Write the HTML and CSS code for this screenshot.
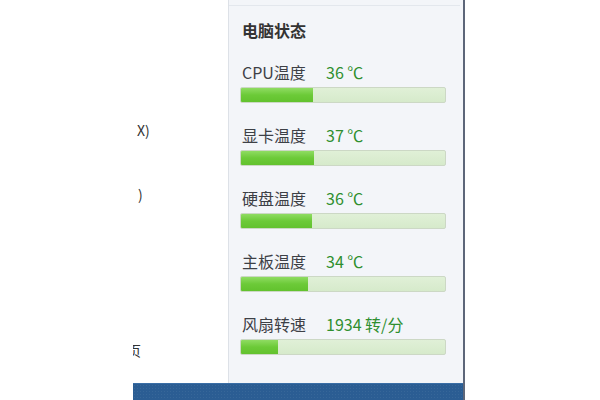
FILE: index.html
```html
<!DOCTYPE html>
<html lang="zh-CN">
<head>
<meta charset="utf-8">
<title>电脑状态</title>
<link rel="stylesheet" href="styles.css">
</head>
<body>
<div class="screen">
  <div class="outside"></div>
  <div class="window">
    <div class="main">
      <div class="left">
        <div class="left-line l1">X)</div>
        <div class="left-line l2">)</div>
        <div class="left-line l3">页</div>
      </div>
      <div class="panel">
        <div class="sep"></div>
        <div class="title">电脑状态</div>
        <div class="row">
          <div class="info"><span class="label">CPU温度</span><span class="value">36 ℃</span></div>
          <div class="bar"><div class="fill" style="width:72px"></div></div>
        </div>
        <div class="row">
          <div class="info"><span class="label">显卡温度</span><span class="value">37 ℃</span></div>
          <div class="bar"><div class="fill" style="width:73px"></div></div>
        </div>
        <div class="row">
          <div class="info"><span class="label">硬盘温度</span><span class="value">36 ℃</span></div>
          <div class="bar"><div class="fill" style="width:71px"></div></div>
        </div>
        <div class="row">
          <div class="info"><span class="label">主板温度</span><span class="value">34 ℃</span></div>
          <div class="bar"><div class="fill" style="width:67px"></div></div>
        </div>
        <div class="row">
          <div class="info"><span class="label">风扇转速</span><span class="value">1934 转/分</span></div>
          <div class="bar"><div class="fill" style="width:37px"></div></div>
        </div>
      </div>
    </div>
    <div class="taskbar"></div>
  </div>
</div>
</body>
</html>
```

FILE: styles.css
```css
html, body {
  margin: 0;
  padding: 0;
  background: #ffffff;
}
.screen {
  width: 600px;
  height: 400px;
  display: flex;
  overflow: hidden;
  background: #ffffff;
  font-family: "Noto Sans CJK SC", "Noto Sans", sans-serif;
}
.outside {
  width: 133px;
  flex: none;
}
.window {
  width: 330px;
  flex: none;
  display: flex;
  flex-direction: column;
  border-right: 2px solid #5d6679;
}
.main {
  height: 383px;
  display: flex;
}
.left {
  width: 95px;
  flex: none;
  overflow: hidden;
  background: #ffffff;
  color: #333333;
  font-size: 14px;
}
.left-line {
  white-space: nowrap;
  line-height: 20px;
}
.l1 { margin-top: 120px; padding-left: 4px; }
.l2 { margin-top: 44px; padding-left: 5px; }
.l3 { margin-top: 136px; margin-left: -6px; }
.panel {
  flex: 1;
  background: #f3f5f9;
  border-left: 1px solid #dde1e7;
  padding: 0 15px 0 13px;
  display: flex;
  flex-direction: column;
}
.sep {
  height: 1px;
  margin: 5px -12px 0 -13px;
  background: #e3e7ed;
}
.title {
  margin-top: 12px;
  height: 24px;
  line-height: 24px;
  font-size: 16px;
  font-weight: bold;
  color: #333333;
}
.row {
  margin-top: 18px;
  display: flex;
  flex-direction: column;
}
.row + .row {
  margin-top: 20px;
}
.info {
  height: 24px;
  line-height: 24px;
  display: flex;
  font-size: 16px;
}
.label {
  width: 84px;
  flex: none;
  color: #3d4046;
}
.value {
  color: #2f8f2f;
}
.bar {
  margin-top: 3px;
  margin-left: -2px;
  width: 204px;
  height: 14px;
  border: 1px solid #ccd8c5;
  border-radius: 2px;
  background: linear-gradient(#e0f0d7, #d6eacb);
  overflow: hidden;
}
.fill {
  height: 100%;
  background: linear-gradient(#8fdc62, #6cca38 50%, #62c22e);
}
.taskbar {
  height: 17px;
  background: #2b5d93;
  border-top: 1px solid #3a6ea6;
  box-sizing: border-box;
  background-image: radial-gradient(circle, rgba(255,255,255,0.06) 0.6px, transparent 0.8px);
  background-size: 3px 3px;
}
```
